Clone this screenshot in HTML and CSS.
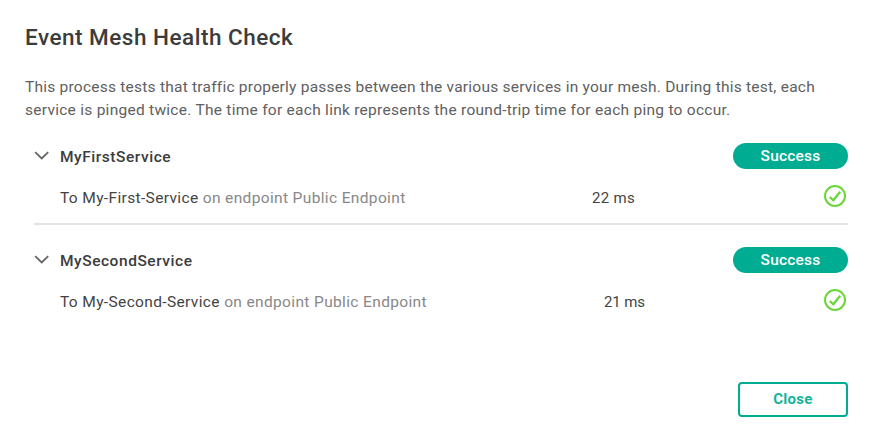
FILE: index.html
```html
<!DOCTYPE html>
<html lang="en">
<head>
<meta charset="utf-8">
<title>Event Mesh Health Check</title>
<link rel="stylesheet" href="styles.css">
</head>
<body>
<main class="dialog">
<h1>Event Mesh Health Check</h1>
<p class="intro">This process tests that traffic properly passes between the various services in your mesh. During this test, each<br><span class="line2">service is pinged twice. The time for each link represents the round-trip time for each ping to occur.</span></p>
<section class="service">
<header class="head"><svg class="chevron" viewBox="0 0 16 10"><path d="M1.2 1.2 7.7 7.4l6.5-6.2"/></svg><h2>MyFirstService</h2><span class="badge">Success</span></header>
<div class="row"><span class="link">To My-First-Service <em>on endpoint Public Endpoint</em></span><span class="time">22 ms</span><svg class="check" viewBox="0 0 24 24"><circle cx="12" cy="12" r="10"/><path d="m6.8 13 3.5 3.3L17.2 7.7"/></svg></div>
</section>
<section class="service">
<header class="head"><svg class="chevron" viewBox="0 0 16 10"><path d="M1.2 1.2 7.7 7.4l6.5-6.2"/></svg><h2>MySecondService</h2><span class="badge">Success</span></header>
<div class="row"><span class="link">To My-Second-Service <em>on endpoint Public Endpoint</em></span><span class="time later">21 ms</span><svg class="check" viewBox="0 0 24 24"><circle cx="12" cy="12" r="10"/><path d="m6.8 13 3.5 3.3L17.2 7.7"/></svg></div>
</section>
<footer><button>Close</button></footer>
</main>
</body>
</html>
```
FILE: styles.css
```css
* { box-sizing: border-box; }
body { margin: 0; background: #fff; font-family: Roboto, sans-serif; color: #444; font-size: 15px; }
.dialog { height: 442px; padding: 21px 27px 25px 25px; display: flex; flex-direction: column; }
h1 { margin: 0; font-size: 22.5px; line-height: 32px; font-weight: 500; letter-spacing: .5px; color: #3c3c3c; }
.intro { margin: 23px 0 0; font-size: 15.5px; line-height: 23px; color: #606060; white-space: nowrap; letter-spacing: .235px; }
.line2 { letter-spacing: .27px; }
.service { margin-left: 9px; height: 82px; border-bottom: 2px solid #e3e3e3; margin-top: 21px; }
.service + .service { border-color: transparent; margin-top: 22px; }
.head { display: flex; align-items: center; height: 26px; }
.chevron { width: 16px; height: 10px; fill: none; stroke: #666; stroke-width: 1.8; }
h2 { margin: 2px auto 0 10px; font-size: 15.5px; font-weight: 500; letter-spacing: .54px; color: #3c3c3c; }
.badge { width: 115px; height: 26px; border-radius: 13px; background: #00ad93; color: #fff; font-size: 15.5px; font-weight: 500; text-align: center; line-height: 26px; letter-spacing: .2px; }
.row { display: flex; align-items: center; height: 24px; margin: 17px 1px 0 26px; }
.link { width: 532px; font-size: 15.5px; letter-spacing: .36px; }
.link em { font-style: normal; color: #888; }
.time { letter-spacing: .3px; }
.later { margin-left: 12px; letter-spacing: -.15px; }
.check { width: 24px; height: 24px; margin: -4px 0 0 auto; fill: none; stroke: #6bd63c; stroke-width: 2; }
.check path { stroke-width: 2.2; }
footer { margin-top: auto; text-align: right; }
button { width: 110px; height: 35px; padding: 0 0 1px; border: 2px solid #00ad93; border-radius: 4px; background: #fff; color: #14b39a; font: 700 15px Roboto, sans-serif; letter-spacing: .3px; vertical-align: top; }
```
